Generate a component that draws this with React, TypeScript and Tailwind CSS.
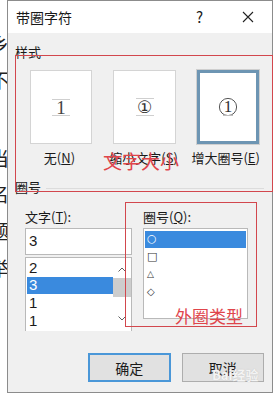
import React from "react";

const F = { fontFamily: '"Noto Sans CJK SC", "Noto Sans", sans-serif' };

function Chevron({ up }: { up?: boolean }) {
  return (
    <svg width="8" height="5" viewBox="0 0 8 5" fill="none" stroke="#606060" strokeWidth="1">
      {up ? <path d="M0.5 4.5 L4 1 L7.5 4.5" /> : <path d="M0.5 0.5 L4 4 L7.5 0.5" />}
    </svg>
  );
}

export default function App() {
  return (
    <div className="w-[279px] h-[400px] bg-white flex relative overflow-hidden" style={F}>
      {/* page behind, left strip */}
      <div className="w-[7px] h-full relative overflow-hidden">
        <div className="absolute left-[-10px] top-[34px] flex flex-col text-[19px] leading-[19px] text-[#222]">
          <span className="h-[36px]">乡</span>
          <span className="h-[78px]">不</span>
          <span className="h-[36px]">当</span>
          <span className="h-[37px]">名</span>
          <span className="h-[37px]">题</span>
          <span className="h-[36px]">举</span>
        </div>
      </div>

      {/* dialog */}
      <div className="w-[266px] h-[393px] border border-[#8c8c8c] flex flex-col bg-[#f0f0f0]">
        {/* title bar */}
        <div className="h-[32px] bg-white flex items-center text-[14px] text-[#1a1a1a]">
          <span className="pl-[8px] leading-[16px]">带圈字符</span>
          <span className="ml-auto mr-[39px] text-[15px] leading-[16px]">?</span>
          <svg width="12" height="12" viewBox="0 0 12 12" className="mr-[18px]" stroke="#222" strokeWidth="1.1">
            <path d="M1 1 L11 11 M11 1 L1 11" />
          </svg>
        </div>

        {/* body */}
        <div className="flex-1 flex flex-col pl-[7px] pr-[8px] pt-[11px] text-[13px] text-[#1a1a1a]">
          <div className="leading-[16px]">样式</div>

          {/* style boxes */}
          <div className="flex mt-[10px] pl-[15px] gap-[21px]">
            <div className="w-[62px] h-[74px] bg-white border border-[#d4d4d4] flex flex-col items-center justify-center">
              <div className="w-[18px] h-px bg-[#cfcfcf]" />
              <span className="text-[19px] leading-[15px] text-[#444]" style={{ fontFamily: '"Liberation Serif", serif' }}>1</span>
              <div className="w-[18px] h-px bg-[#cfcfcf]" />
            </div>
            <div className="w-[63px] h-[74px] bg-white border border-[#d4d4d4] flex flex-col items-center justify-center">
              <div className="w-[18px] h-px bg-[#cfcfcf]" />
              <span className="text-[17px] leading-[16px] text-[#333]" style={{ fontFamily: '"DejaVu Sans", sans-serif' }}>①</span>
              <div className="w-[18px] h-px bg-[#cfcfcf]" />
            </div>
            <div className="w-[62px] h-[74px] bg-white border-[3px] border-[#6d95b3] outline outline-1 outline-[#cfcfcf] flex items-center justify-center">
              <div className="relative w-[20px] h-[20px] flex items-center justify-center">
                <svg width="20" height="20" viewBox="0 0 20 20" className="absolute inset-0">
                  <circle cx="10" cy="10" r="8.6" fill="none" stroke="#444" strokeWidth="0.9" />
                  <path d="M5 18.5 H15" stroke="#bdbdbd" strokeWidth="1" />
                </svg>
                <span className="relative text-[17px] leading-[14px] text-[#333]" style={{ fontFamily: '"Liberation Serif", serif' }}>1</span>
              </div>
            </div>
          </div>

          {/* labels */}
          <div className="flex mt-[6px] leading-[16px] text-[13px]">
            <span className="w-[76px] text-center pl-[14px]">无(<u>N</u>)</span>
            <span className="w-[97px] text-center pl-[12px]">缩小文字(<u>S</u>)</span>
            <span className="w-[80px] text-center pl-[2px]">增大圈号(<u>E</u>)</span>
          </div>

          {/* 圈号 group */}
          <div className="flex items-center mt-[13px] leading-[16px]">
            <span>圈号</span>
            <div className="flex-1 h-px bg-[#dcdcdc] ml-[5px] mt-[2px]" />
          </div>

          <div className="flex mt-[14px] pl-[10px]">
            {/* left column */}
            <div className="w-[107px] flex flex-col">
              <div className="leading-[16px]">文字(<u>T</u>):</div>
              <div className="mt-[3px] h-[27px] bg-white border border-[#b9b9b9] flex items-center pl-[3px] text-[15px]" style={{ fontFamily: '"Liberation Sans", sans-serif' }}>3</div>
              <div className="mt-[2px] h-[74px] bg-white border border-[#b9b9b9] border-b-0 flex text-[15px]" style={{ fontFamily: '"Liberation Sans", sans-serif' }}>
                <div className="flex-1 flex flex-col pl-[1px] pt-[1px]">
                  <div className="h-[18px] flex items-center pl-[2px]">2</div>
                  <div className="h-[17px] flex items-center pl-[2px] bg-[#3a8ade] text-white">3</div>
                  <div className="h-[18px] flex items-center pl-[2px]">1</div>
                  <div className="h-[18px] flex items-center pl-[2px]">1</div>
                </div>
                <div className="w-[18px] flex flex-col items-center">
                  <div className="h-[20px] flex items-center justify-center pt-[2px]"><Chevron up /></div>
                  <div className="w-full h-[19px] bg-[#cdcdcd]" />
                  <div className="flex-1 flex items-end justify-center pb-[10px]"><Chevron /></div>
                </div>
              </div>
            </div>

            {/* right column */}
            <div className="w-[105px] ml-[11px] flex flex-col">
              <div className="leading-[16px]">圈号(<u>Q</u>):</div>
              <div className="mt-[3px] h-[91px] bg-white border border-[#b9b9b9] flex flex-col pt-[2px] px-[1px] text-[11px]" style={{ fontFamily: '"DejaVu Sans", sans-serif' }}>
                <div className="h-[17px] bg-[#3a8ade] text-white flex items-center pl-[2px]">○</div>
                <div className="h-[18px] flex items-center pl-[2px] text-[#333]">□</div>
                <div className="h-[17px] flex items-center pl-[2px] text-[#333] text-[9px]">△</div>
                <div className="h-[17px] flex items-center pl-[2px] text-[#333] text-[10px]">◇</div>
              </div>
            </div>
          </div>

          {/* buttons */}
          <div className="flex mt-auto mb-[10px] pl-[73px] gap-[11px] text-[14px]">
            <button className="w-[86px] h-[29px] bg-[#e1e1e1] border-2 border-[#4a97d8] flex items-center justify-center leading-[16px]">确定</button>
            <button className="w-[86px] h-[29px] bg-[#e1e1e1] border border-[#adadad] flex items-center justify-center leading-[16px]">取消</button>
          </div>
        </div>
      </div>

      {/* annotations overlay */}
      <div className="absolute left-[15px] top-[55px] w-[258px] h-[137px] border border-[#d2474d] pointer-events-none" />
      <div className="absolute left-[103px] top-[150px] text-[19px] leading-[22px] text-[#e0454b] pointer-events-none">文字大小</div>
      <div className="absolute left-[125px] top-[202px] w-[132px] h-[125px] border border-[#d2474d] pointer-events-none" />
      <div className="absolute left-[175px] top-[306px] text-[17px] leading-[20px] text-[#e0454b] pointer-events-none">外圈类型</div>
      <div className="absolute left-[212px] top-[368px] text-[13px] leading-[14px] font-bold text-[#f4f4f4] pointer-events-none" style={{ textShadow: "0 0 1px #bbb" }}>Bai经验</div>
    </div>
  );
}
